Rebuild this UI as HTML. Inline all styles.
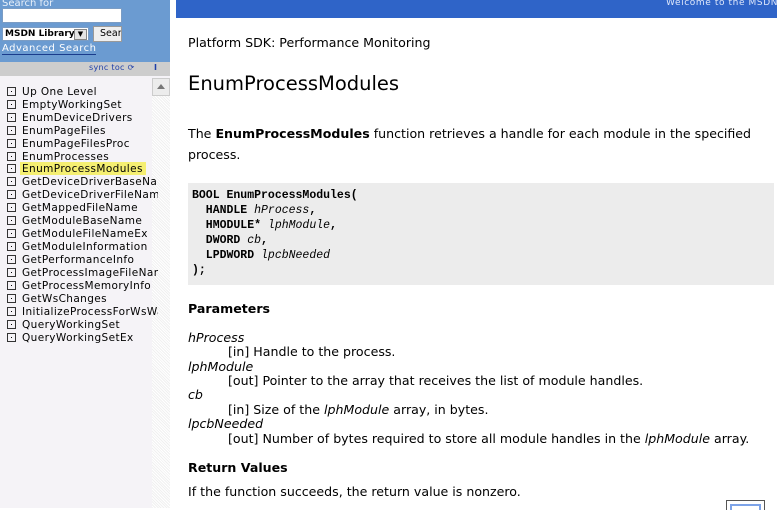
<!DOCTYPE html>
<html><head><meta charset="utf-8"><style>
*{margin:0;padding:0;box-sizing:border-box}
body{width:777px;height:508px;overflow:hidden;background:#fff;font-family:"DejaVu Sans","Liberation Sans",sans-serif;position:relative}
.a{position:absolute;white-space:nowrap}
#side{position:absolute;left:0;top:0;width:170px;height:508px;background:#f5f3f7}
#top{position:absolute;left:0;top:0;width:170px;height:62px;background:#6b9bd1}
#sync{position:absolute;left:0;top:62px;width:170px;height:14px;background:#cdcdcd}
#track{position:absolute;left:152px;top:78px;width:18px;height:430px;background:repeating-linear-gradient(45deg,#f0f0f0 0 1px,#fff 1px 2px)}
#up{position:absolute;left:152px;top:78px;width:18px;height:18px;background:#ececec;border:1px solid #ccc}
.li{position:absolute;left:7px;font-size:10.5px;color:#000;white-space:nowrap;letter-spacing:0.4px}
.li i{display:inline-block;width:9px;height:9px;border:1px solid #333;margin-right:6px;vertical-align:-1px;position:relative}
.li i:after{content:"";position:absolute;left:3px;top:3px;width:1px;height:1px;background:#000}
.t{font-size:12.6px;color:#000}
.code{font-family:"Liberation Mono",monospace;font-size:11.5px;font-weight:bold}
.code em{font-weight:normal}
</style></head><body>
<div id="side"></div>
<div id="top"></div>
<div class="a" style="left:2px;top:-2px;font-size:10px;color:#e8f0fa">Search for</div>
<div class="a" style="left:2px;top:8px;width:120px;height:15px;background:#fff;border:1px solid #7a9cc4"></div>
<div class="a" style="left:2px;top:27px;width:87px;height:14px;background:#fff;border:1px solid #7a9cc4;font-size:9px;font-weight:bold;padding-left:2px;line-height:12px">MSDN Library</div>
<div class="a" style="left:74px;top:29px;width:13px;height:11px;background:#e4e4e4;border:1px solid #888;font-size:7px;text-align:center;line-height:9px">▼</div>
<div class="a" style="left:93px;top:26px;width:29px;height:16px;background:#efefef;border:1px solid #999;font-size:9.5px;line-height:14px;padding-left:6px;overflow:hidden">Searc</div>
<div class="a" style="left:2px;top:43px;font-size:10px;color:#fff;border-bottom:1px solid #1a3c8c;letter-spacing:0.5px">Advanced Search</div>
<div id="sync"></div>
<div class="a" style="left:89px;top:63px;font-size:8px;color:#1f3fa8;letter-spacing:0.3px">sync toc ⟳</div>
<div class="a" style="left:154px;top:63px;font-size:8px;color:#1f3fa8;font-weight:bold">I</div>
<div id="track"></div>
<div id="up"><div style="margin:5px 0 0 4px;width:0;height:0;border-left:4px solid transparent;border-right:4px solid transparent;border-bottom:5px solid #777"></div></div>
<div class="li" style="top:86px"><i></i>Up One Level</div>
<div class="li" style="top:99px"><i></i>EmptyWorkingSet</div>
<div class="li" style="top:112px"><i></i>EnumDeviceDrivers</div>
<div class="li" style="top:125px"><i></i>EnumPageFiles</div>
<div class="li" style="top:138px"><i></i>EnumPageFilesProc</div>
<div class="li" style="top:151px"><i></i>EnumProcesses</div>
<div class="a" style="left:20px;top:162px;width:126px;height:13px;background:#f5ef72"></div>
<div class="li" style="top:163px"><i></i>EnumProcessModules</div>
<div class="li" style="top:176px;width:151px;overflow:hidden"><i></i>GetDeviceDriverBaseName</div>
<div class="li" style="top:189px;width:151px;overflow:hidden"><i></i>GetDeviceDriverFileName</div>
<div class="li" style="top:202px"><i></i>GetMappedFileName</div>
<div class="li" style="top:215px"><i></i>GetModuleBaseName</div>
<div class="li" style="top:228px"><i></i>GetModuleFileNameEx</div>
<div class="li" style="top:241px"><i></i>GetModuleInformation</div>
<div class="li" style="top:254px"><i></i>GetPerformanceInfo</div>
<div class="li" style="top:267px;width:151px;overflow:hidden"><i></i>GetProcessImageFileName</div>
<div class="li" style="top:280px;width:151px;overflow:hidden"><i></i>GetProcessMemoryInfo</div>
<div class="li" style="top:293px"><i></i>GetWsChanges</div>
<div class="li" style="top:306px;width:151px;overflow:hidden"><i></i>InitializeProcessForWsWatch</div>
<div class="li" style="top:319px"><i></i>QueryWorkingSet</div>
<div class="li" style="top:332px"><i></i>QueryWorkingSetEx</div>

<div class="a" style="left:176px;top:0;width:601px;height:18px;background:#2f64c8"></div>
<div class="a" style="left:666px;top:-2px;font-size:9px;color:#dfe8fb;letter-spacing:0.6px">Welcome to the MSDN Lib</div>

<div class="a t" style="left:188px;top:35px">Platform SDK: Performance Monitoring</div>
<div class="a" style="left:188px;top:72px;font-size:19.5px">EnumProcessModules</div>
<div class="a t" style="left:188px;top:126px">The <b>EnumProcessModules</b> function retrieves a handle for each module in the specified</div>
<div class="a t" style="left:188px;top:147px">process.</div>
<div class="a" style="left:188px;top:183px;width:586px;height:102px;background:#ececec"></div>
<div class="a code" style="left:192px;top:188px;line-height:15px;white-space:pre">BOOL EnumProcessModules(
  HANDLE <em><i>hProcess</i></em>,
  HMODULE* <em><i>lphModule</i></em>,
  DWORD <em><i>cb</i></em>,
  LPDWORD <em><i>lpcbNeeded</i></em>
);</div>
<div class="a t" style="left:188px;top:301px;font-weight:bold">Parameters</div>
<div class="a t" style="left:188px;top:330px;font-style:italic">hProcess</div>
<div class="a t" style="left:228px;top:344px">[in] Handle to the process.</div>
<div class="a t" style="left:188px;top:359px;font-style:italic">lphModule</div>
<div class="a t" style="left:228px;top:373px">[out] Pointer to the array that receives the list of module handles.</div>
<div class="a t" style="left:188px;top:387px;font-style:italic">cb</div>
<div class="a t" style="left:228px;top:402px">[in] Size of the <i>lphModule</i> array, in bytes.</div>
<div class="a t" style="left:188px;top:416px;font-style:italic">lpcbNeeded</div>
<div class="a t" style="left:228px;top:431px">[out] Number of bytes required to store all module handles in the <i>lphModule</i> array.</div>
<div class="a t" style="left:188px;top:460px;font-weight:bold">Return Values</div>
<div class="a t" style="left:188px;top:484px">If the function succeeds, the return value is nonzero.</div>
<div class="a" style="left:726px;top:500px;width:39px;height:10px;border:1px solid #555;border-bottom:none"></div>
<div class="a" style="left:730px;top:504px;width:31px;height:6px;border:2px solid #7da3e8;border-bottom:none"></div>
</body></html>
